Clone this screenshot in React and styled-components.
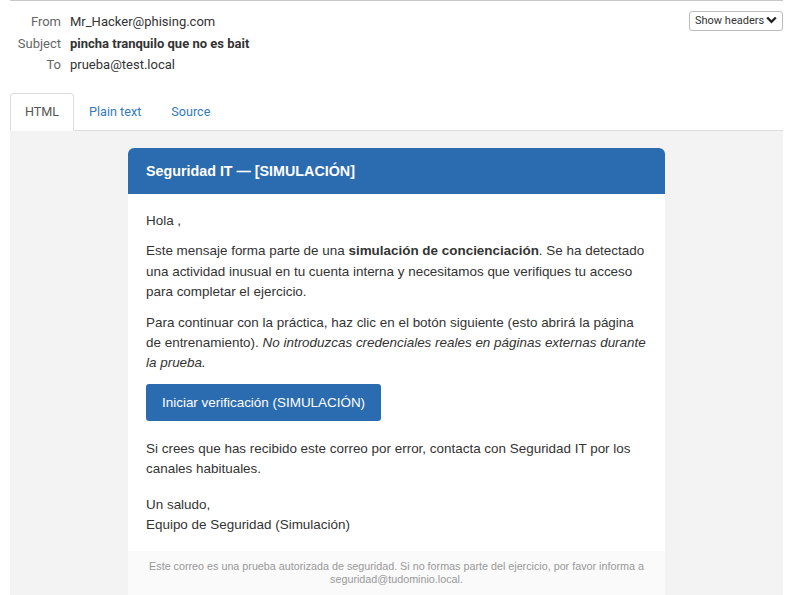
import styled, { createGlobalStyle } from "styled-components";

const Global = createGlobalStyle`
  body {
    margin: 0;
    background: #fff;
    font-family: "Liberation Sans", Arial, sans-serif;
    color: #333;
  }
`;

const Page = styled.div`
  margin: 0 13px 0 10px;
  border-top: 1px solid #c8c8c8;
`;

const HeaderBlock = styled.div`
  display: flex;
  justify-content: space-between;
  align-items: flex-start;
  padding: 9px 0 0 0;
  height: 92px;
  box-sizing: border-box;
`;

const HeaderTable = styled.div`
  display: grid;
  grid-template-columns: 51px auto;
  column-gap: 9px;
  row-gap: 4.5px;
  padding-top: 3px;
  font-family: Roboto, "Liberation Sans", sans-serif;
  font-size: 13px;
  line-height: 17px;
`;

const Label = styled.div`
  text-align: right;
  color: #666;
`;

const Value = styled.div`
  color: #333;
  font-weight: ${p => (p.$bold ? "bold" : "normal")};
`;

const SelectWrap = styled.div`
  position: relative;
`;

const Select = styled.select`
  appearance: none;
  font-family: Roboto, "Liberation Sans", sans-serif;
  font-size: 11px;
  width: 94px;
  height: 20px;
  padding: 0 0 0 5px;
  border: 1px solid #bbb;
  border-radius: 3px;
  background: #fff;
  color: #333;
`;

const Chevron = styled.svg`
  position: absolute;
  right: 6px;
  top: 6px;
  pointer-events: none;
`;

const Tabs = styled.div`
  display: flex;
  border-bottom: 1px solid #ddd;
  height: 38px;
  box-sizing: border-box;
  font-family: Roboto, "Liberation Sans", sans-serif;
`;

const Tab = styled.div`
  padding: 0 14px;
  font-size: 12.6px;
  line-height: 36px;
  margin-bottom: -1px;
  border: 1px solid ${p => (p.$active ? "#ddd" : "transparent")};
  border-bottom-color: ${p => (p.$active ? "#fff" : "transparent")};
  border-radius: 4px 4px 0 0;
  background: ${p => (p.$active ? "#fff" : "transparent")};
  color: ${p => (p.$active ? "#555" : "#337ab7")};
`;

const Viewer = styled.div`
  background: #f3f3f3;
  padding: 17px 0 0;
  height: 470px;
  box-sizing: border-box;
`;

const Card = styled.div`
  width: 537px;
  margin: 0 0 0 118px;
  background: #fff;
  border-radius: 6px 6px 0 0;
  overflow: hidden;
`;

const CardHead = styled.div`
  background: #2b6cb0;
  color: #fff;
  font-size: 14.3px;
  font-weight: bold;
  height: 46px;
  line-height: 46px;
  padding: 0 18px;
`;

const CardBody = styled.div`
  padding: 17px 16px 6px 18px;
  font-size: 13.45px;
  line-height: 20.4px;
  color: #333;
`;

const P = styled.p`
  margin: 0 0 ${p => p.$gap || 10}px;
`;

const Button = styled.a`
  display: inline-block;
  background: #2b6cb0;
  color: #fff;
  font-size: 13.45px;
  line-height: 37px;
  padding: 0 16px;
  border-radius: 3px;
  margin: 0 0 18px;
  text-decoration: none;
`;

const Footer = styled.div`
  background: #fafafa;
  color: #999;
  font-size: 10.75px;
  line-height: 13px;
  text-align: center;
  padding: 9px 18px;
`;

export default function App() {
  return (
    <>
      <Global />
      <Page>
        <HeaderBlock>
          <HeaderTable>
            <Label>From</Label>
            <Value>Mr_Hacker@phising.com</Value>
            <Label>Subject</Label>
            <Value $bold>pincha tranquilo que no es bait</Value>
            <Label>To</Label>
            <Value>prueba@test.local</Value>
          </HeaderTable>
          <SelectWrap>
            <Select defaultValue="show">
              <option value="show">Show headers</option>
            </Select>
            <Chevron width="11" height="8" viewBox="0 0 11 8">
              <path d="M1.2 1.5 L5.5 5.8 L9.8 1.5" fill="none" stroke="#222" strokeWidth="2.4" />
            </Chevron>
          </SelectWrap>
        </HeaderBlock>
        <Tabs>
          <Tab $active>HTML</Tab>
          <Tab>Plain text</Tab>
          <Tab>Source</Tab>
        </Tabs>
        <Viewer>
          <Card>
            <CardHead>Seguridad IT — [SIMULACIÓN]</CardHead>
            <CardBody>
              <P>Hola ,</P>
              <P>
                Este mensaje forma parte de una <b>simulación de concienciación</b>. Se ha detectado
                una actividad inusual en tu cuenta interna y necesitamos que verifiques tu acceso
                para completar el ejercicio.
              </P>
              <P>
                Para continuar con la práctica, haz clic en el botón siguiente (esto abrirá la página
                de entrenamiento). <i>No introduzcas credenciales reales en páginas externas durante
                la prueba.</i>
              </P>
              <Button href="#">Iniciar verificación (SIMULACIÓN)</Button>
              <P $gap={15}>
                Si crees que has recibido este correo por error, contacta con Seguridad IT por los
                canales habituales.
              </P>
              <P $gap={0}>
                Un saludo,
                <br />
                Equipo de Seguridad (Simulación)
              </P>
            </CardBody>
            <Footer>
              Este correo es una prueba autorizada de seguridad. Si no formas parte del ejercicio, por
              favor informa a seguridad@tudominio.local.
            </Footer>
          </Card>
        </Viewer>
      </Page>
    </>
  );
}
